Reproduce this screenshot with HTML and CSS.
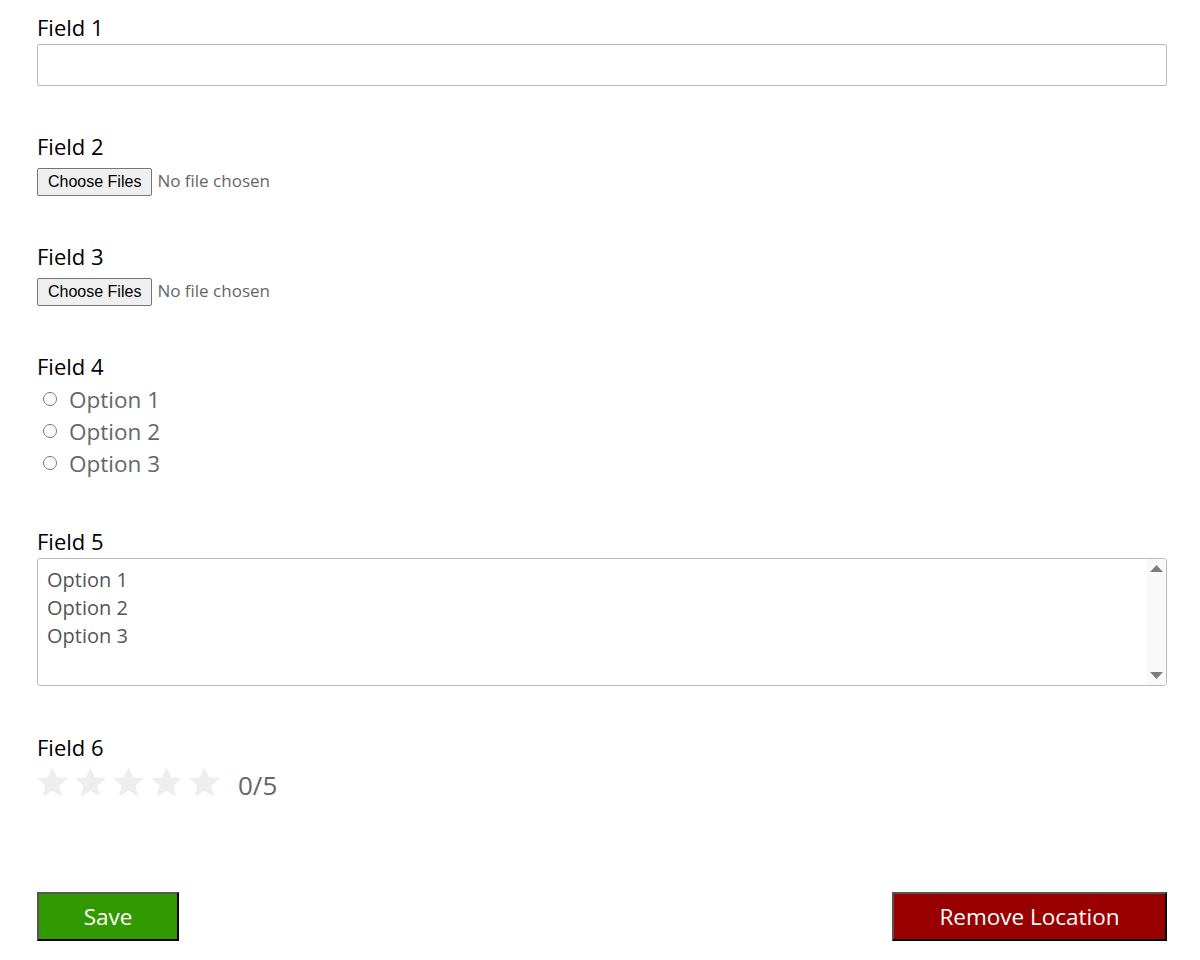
FILE: index.html
```html
<!DOCTYPE html>
<html lang="en">
<head>
<meta charset="utf-8">
<title>Location form</title>
<link rel="stylesheet" href="styles.css">
</head>
<body>
<form class="form">
  <div class="group">
    <label class="lbl" for="f1">Field 1</label>
    <input class="text" id="f1" type="text">
  </div>
  <div class="group">
    <label class="lbl" for="f2">Field 2</label>
    <input class="file" id="f2" type="file" multiple>
  </div>
  <div class="group">
    <label class="lbl" for="f3">Field 3</label>
    <input class="file" id="f3" type="file" multiple>
  </div>
  <div class="group">
    <label class="lbl">Field 4</label>
    <div class="radios">
      <label class="radio"><input type="radio" name="f4"><span>Option 1</span></label>
      <label class="radio"><input type="radio" name="f4"><span>Option 2</span></label>
      <label class="radio"><input type="radio" name="f4"><span>Option 3</span></label>
    </div>
  </div>
  <div class="group">
    <label class="lbl" for="f5">Field 5</label>
    <div class="listwrap">
      <select class="list" id="f5" multiple>
        <option>Option 1</option>
        <option>Option 2</option>
        <option>Option 3</option>
      </select>
      <div class="scrollbar" aria-hidden="true">
        <svg class="arrow" viewBox="0 0 13 7"><path d="M6.5 0L13 7H0z"/></svg>
        <svg class="arrow" viewBox="0 0 13 7"><path d="M0 0h13L6.5 7z"/></svg>
      </div>
    </div>
  </div>
  <div class="group">
    <label class="lbl">Field 6</label>
    <div class="rating">
      <span class="stars">
        <svg class="star" viewBox="2 2 20 19.3"><path d="M12 17.27L18.18 21l-1.64-7.03L22 9.24l-7.19-.61L12 2 9.19 8.63 2 9.24l5.46 4.73L5.82 21z"/></svg>
        <svg class="star" viewBox="2 2 20 19.3"><path d="M12 17.27L18.18 21l-1.64-7.03L22 9.24l-7.19-.61L12 2 9.19 8.63 2 9.24l5.46 4.73L5.82 21z"/></svg>
        <svg class="star" viewBox="2 2 20 19.3"><path d="M12 17.27L18.18 21l-1.64-7.03L22 9.24l-7.19-.61L12 2 9.19 8.63 2 9.24l5.46 4.73L5.82 21z"/></svg>
        <svg class="star" viewBox="2 2 20 19.3"><path d="M12 17.27L18.18 21l-1.64-7.03L22 9.24l-7.19-.61L12 2 9.19 8.63 2 9.24l5.46 4.73L5.82 21z"/></svg>
        <svg class="star" viewBox="2 2 20 19.3"><path d="M12 17.27L18.18 21l-1.64-7.03L22 9.24l-7.19-.61L12 2 9.19 8.63 2 9.24l5.46 4.73L5.82 21z"/></svg>
      </span>
      <span class="score">0/5</span>
    </div>
  </div>
  <div class="actions">
    <button type="button" class="btn save">Save</button>
    <button type="button" class="btn remove">Remove Location</button>
  </div>
</form>
</body>
</html>
```

FILE: styles.css
```css
html, body {
  margin: 0;
  background: #ffffff;
}

body {
  font-family: "Open Sans", "Liberation Sans", sans-serif;
  color: #000;
  padding: 12px 33px 0 37px;
}

.form {
  display: flex;
  flex-direction: column;
}

.group {
  display: flex;
  flex-direction: column;
  align-items: flex-start;
  margin-bottom: 45px;
}

.lbl {
  display: block;
  font-size: 22px;
  line-height: 30px;
  margin-bottom: 2px;
  color: #000;
}

.text {
  box-sizing: border-box;
  width: 100%;
  height: 42px;
  margin: 0;
  border: 1px solid #bbbbbb;
  border-radius: 2px;
  padding: 0 10px;
  font: 18px "Open Sans", sans-serif;
  background: #fff;
}

.file {
  display: block;
  height: 28px;
  margin: 5px 0 0;
  font: 17px "Open Sans", sans-serif;
  color: #666;
}

.file::file-selector-button {
  box-sizing: border-box;
  height: 28px;
  padding: 0 10px;
  margin: 0 5px 0 0;
  font: 16px "Liberation Sans", Arial, sans-serif;
  color: #000;
  background: #efefef;
  border: 1px solid #767676;
  border-radius: 2px;
}

.radios {
  display: flex;
  flex-direction: column;
  margin-bottom: 2px;
}

.radio {
  display: flex;
  align-items: center;
  height: 32px;
  font-size: 22.5px;
  color: #666;
}

.radio input {
  width: 14px;
  height: 14px;
  margin: 0 12px 0 6px;
}

.listwrap {
  position: relative;
  width: 100%;
  height: 128px;
  margin-bottom: 1px;
}

.list {
  display: block;
  box-sizing: border-box;
  width: 100%;
  height: 128px;
  margin: 0;
  padding: 7px 7px;
  border: 1px solid #bbbbbb;
  border-radius: 3px;
  font: 20px "Open Sans", sans-serif;
  color: #555;
  background: #fff;
  outline: none;
}

.scrollbar {
  position: absolute;
  top: 1px;
  right: 1px;
  bottom: 1px;
  width: 19px;
  box-sizing: border-box;
  padding: 6px 0 6px;
  background: #f9f9f9;
  border-radius: 0 2px 2px 0;
  display: flex;
  flex-direction: column;
  justify-content: space-between;
  align-items: center;
}

.arrow {
  width: 13px;
  height: 7px;
  fill: #7d7d7d;
}

.rating {
  display: flex;
  align-items: center;
  height: 36px;
}

.stars {
  display: flex;
  gap: 7px;
}

.star {
  width: 31px;
  height: 30px;
  fill: #eeeeee;
}

.score {
  margin-left: 18px;
  margin-top: 5px;
  font-size: 26px;
  color: #666;
}

.actions {
  display: flex;
  justify-content: space-between;
  margin-top: 47px;
}

.btn {
  box-sizing: border-box;
  height: 49px;
  padding: 0;
  font: 22.5px "Open Sans", sans-serif;
  color: #fff;
  border: 2px solid;
  border-color: #555 #000 #000 #555;
  cursor: pointer;
}

.save {
  width: 142px;
  background: #339900;
}

.remove {
  width: 275px;
  background: #990000;
}
```
